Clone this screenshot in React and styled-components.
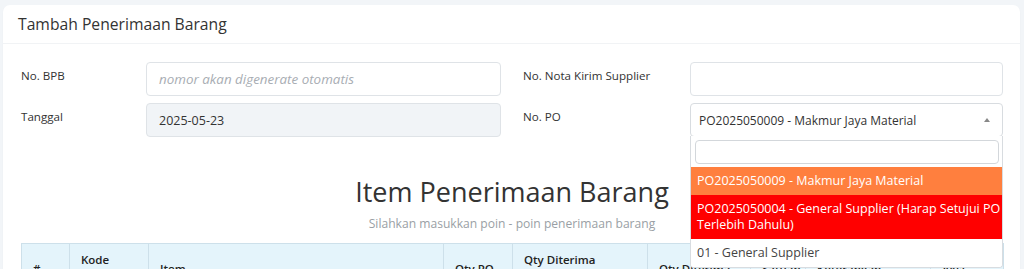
import React from "react";
import styled, { createGlobalStyle } from "styled-components";

const Global = createGlobalStyle`
  html, body { margin: 0; padding: 0; }
  body {
    background: #f2f5f8;
    font-family: "Open Sans", "Noto Sans", sans-serif;
    color: #333;
    overflow: hidden;
  }
`;

const Page = styled.div`
  padding: 5px 4px 0 3px;
`;

const Card = styled.div`
  background: #fff;
  border-radius: 7px;
  box-shadow: 0 1px 2px rgba(0,0,0,0.03);
`;

const CardHeader = styled.div`
  height: 38px;
  display: flex;
  align-items: center;
  padding: 0 15px;
  border-bottom: 1px solid #f1f3f5;
  font-size: 15.7px;
  color: #333;
`;

const CardBody = styled.div`
  padding: 18px 17px 0 18px;
`;

const FormGrid = styled.div`
  display: grid;
  grid-template-columns: 480px 480px;
  column-gap: 22px;
  row-gap: 7px;
`;

const Field = styled.div`
  display: grid;
  grid-template-columns: ${p => p.$label}px 1fr;
  position: relative;
`;

const Label = styled.label`
  font-size: 11.6px;
  line-height: 20px;
  padding-top: 4px;
  color: #333;
`;

const Input = styled.div`
  box-sizing: border-box;
  height: 34px;
  border: 1px solid #dfe3e7;
  border-radius: 4px;
  background: ${p => (p.$disabled ? "#f1f4f7" : "#fff")};
  display: flex;
  align-items: center;
  padding: 0 12px;
  font-size: 12.5px;
  color: #333;
`;

const Placeholder = styled.span`
  font-style: italic;
  font-size: 13.4px;
  color: #a8adb3;
`;

const SelectBox = styled(Input)`
  justify-content: space-between;
  padding: 0 12px 0 8px;
  border-color: #d8dce0;
  font-size: 12px;
`;

const Arrow = styled.span`
  width: 0;
  height: 0;
  border-left: 3.5px solid transparent;
  border-right: 3.5px solid transparent;
  border-bottom: 4px solid #888;
  margin-top: -1px;
`;

const Dropdown = styled.div`
  position: absolute;
  left: ${p => p.$left}px;
  right: 0;
  top: 33px;
  box-sizing: border-box;
  background: #fff;
  border: 1px solid #d8dce0;
  border-top: none;
  border-radius: 0 0 4px 4px;
  padding-top: 4px;
  z-index: 5;
  overflow: hidden;
`;

const Search = styled.div`
  margin: 0 3px 3px 4px;
  height: 24px;
  box-sizing: border-box;
  border: 1px solid #d3d7db;
  border-radius: 4px;
`;

const Option = styled.div`
  padding: 6px 0 6px 6px;
  line-height: 16px;
  font-size: 12.5px;
  background: ${p => p.$bg || "#fff"};
  color: ${p => (p.$bg ? "#fff" : "#444")};
`;

const Heading = styled.h3`
  margin: 39px 0 0;
  text-align: center;
  font-weight: 400;
  font-size: 27px;
  line-height: 32px;
  color: #333;
`;

const Sub = styled.p`
  margin: 8px 0 0;
  text-align: center;
  font-size: 12.1px;
  line-height: 16px;
  color: #9a9fa5;
`;

const Table = styled.table`
  margin-top: 11px;
  width: 982px;
  border-collapse: collapse;
  table-layout: fixed;
`;

const Th = styled.th`
  background: #e4f4fb;
  border: 1px solid #cde0ea;
  text-align: left;
  font-weight: 600;
  font-size: 11.5px;
  line-height: 17px;
  padding: 7px 10px 7px 11px;
  color: #222;
  vertical-align: middle;
`;

const cols = [
  { w: 48, t: "#" },
  { w: 79, t: "Kode Barang" },
  { w: 295, t: "Item" },
  { w: 69, t: "Qty PO" },
  { w: 135, t: "Qty Diterima Sebelumnya" },
  { w: 103, t: "Qty Diterima" },
  { w: 55, t: "Satuan" },
  { w: 125, t: "Keterangan" },
  { w: 73, t: "Aksi" },
];

export default function App() {
  return (
    <Page>
      <Global />
      <Card>
        <CardHeader>Tambah Penerimaan Barang</CardHeader>
        <CardBody>
          <FormGrid>
            <Field $label={125}>
              <Label>No. BPB</Label>
              <Input>
                <Placeholder>nomor akan digenerate otomatis</Placeholder>
              </Input>
            </Field>
            <Field $label={167}>
              <Label>No. Nota Kirim Supplier</Label>
              <Input />
            </Field>
            <Field $label={125}>
              <Label>Tanggal</Label>
              <Input $disabled>2025-05-23</Input>
            </Field>
            <Field $label={167}>
              <Label>No. PO</Label>
              <SelectBox>
                <span>PO2025050009 - Makmur Jaya Material</span>
                <Arrow />
              </SelectBox>
              <Dropdown $left={167}>
                <Search />
                <Option $bg="#ff7f3e">PO2025050009 - Makmur Jaya Material</Option>
                <Option $bg="#ff0000">
                  PO2025050004 - General Supplier (Harap Setujui PO Terlebih Dahulu)
                </Option>
                <Option>01 - General Supplier</Option>
              </Dropdown>
            </Field>
          </FormGrid>
          <Heading>Item Penerimaan Barang</Heading>
          <Sub>Silahkan masukkan poin - poin penerimaan barang</Sub>
          <Table>
            <colgroup>
              {cols.map((c, i) => (
                <col key={i} style={{ width: c.w }} />
              ))}
            </colgroup>
            <thead>
              <tr>
                {cols.map((c, i) => (
                  <Th key={i}>{c.t}</Th>
                ))}
              </tr>
            </thead>
          </Table>
        </CardBody>
      </Card>
    </Page>
  );
}
